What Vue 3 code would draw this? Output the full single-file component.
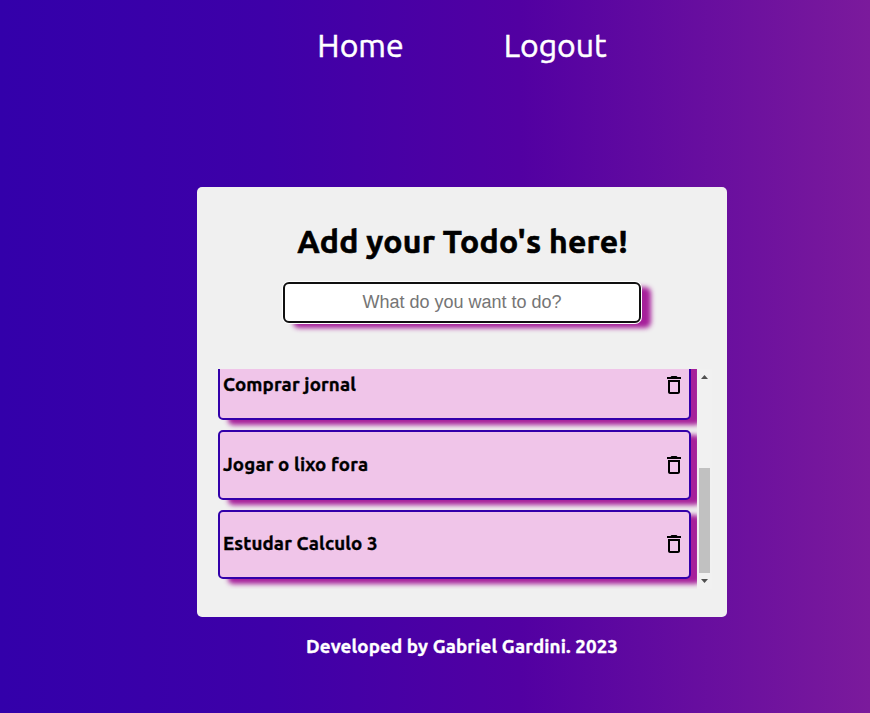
<script setup>
import { ref, onMounted } from 'vue'

const links = [
  { label: 'Home', cls: 'home' },
  { label: 'Logout', cls: 'logout' },
]
const todos = ref(['Comprar jornal', 'Jogar o lixo fora', 'Estudar Calculo 3'])
const draft = ref('')
const list = ref(null)

function remove(index) {
  todos.value.splice(index, 1)
}
function add() {
  if (draft.value.trim()) todos.value.push(draft.value.trim())
  draft.value = ''
}
onMounted(() => {
  list.value.scrollTop = list.value.scrollHeight
})
</script>

<template>
  <div class="viewport">
    <div class="page">
      <nav class="nav">
        <a v-for="link in links" :key="link.label" :class="link.cls">{{ link.label }}</a>
      </nav>
      <main class="card">
        <h1>Add your Todo's here!</h1>
        <input v-model="draft" class="entry" placeholder="What do you want to do?" @keyup.enter="add" />
        <div class="scroller">
          <ul ref="list" class="list">
            <li v-for="(todo, i) in todos" :key="todo" class="todo">
              <span class="label">{{ todo }}</span>
              <svg class="trash" viewBox="0 0 24 24" @click="remove(i)">
                <path d="M6 19c0 1.1.9 2 2 2h8c1.1 0 2-.9 2-2V7H6v12zM8 9h8v10H8V9zm7.5-5l-1-1h-5l-1 1H5v2h14V4z" />
              </svg>
            </li>
          </ul>
          <div class="bar">
            <svg class="arrow" viewBox="0 0 7 4"><path d="M0 4L3.5 0L7 4z" /></svg>
            <div class="thumb"></div>
            <svg class="arrow" viewBox="0 0 7 4"><path d="M0 0L3.5 4L7 0z" /></svg>
          </div>
        </div>
      </main>
      <footer>Developed by Gabriel Gardini. 2023</footer>
    </div>
  </div>
</template>

<style>
body {
  margin: 0;
  overflow: hidden;
}
</style>

<style scoped>
.viewport {
  width: 100%;
  height: 713px;
  overflow: hidden;
  font-family: Ubuntu, 'Noto Sans', sans-serif;
}
.page {
  width: 924px;
  height: 713px;
  display: flex;
  flex-direction: column;
  align-items: center;
  background: linear-gradient(90deg, #3300aa 0, #3e00a8 270px, #5200a2 520px, #7b1a9c 870px);
}
.nav {
  height: 187px;
  box-sizing: border-box;
  padding-top: 23px;
  display: flex;
  gap: 100px;
  color: #fff;
  font-size: 32px;
  line-height: 44px;
  -webkit-text-stroke: 0.5px #fff;
}
.card {
  width: 530px;
  height: 430px;
  box-sizing: border-box;
  padding: 31px 15px 0 21px;
  display: flex;
  flex-direction: column;
  align-items: center;
  background: #f0f0f0;
  border-radius: 5px;
}
h1 {
  margin: 0 5px 0 0;
  font-size: 32px;
  font-weight: 700;
  line-height: 46px;
  letter-spacing: 0.22px;
  white-space: nowrap;
  -webkit-text-stroke: 0.6px #000;
}
.entry {
  box-sizing: border-box;
  width: 358px;
  height: 41px;
  margin: 18px 6px 0 0;
  padding: 0;
  border: 2px solid #101010;
  border-radius: 6px;
  outline: none;
  background: #fff;
  box-shadow: 0 0 0 1px #fff, 10px 5px 5px #a6209a;
  font: 18px 'Liberation Sans', sans-serif;
  text-align: center;
}
.entry::placeholder {
  color: #757575;
}
.scroller {
  width: 494px;
  height: 220px;
  margin-top: 46px;
  display: flex;
}
.list {
  width: 479px;
  height: 220px;
  box-sizing: border-box;
  margin: 0;
  padding: 0 0 10px;
  list-style: none;
  overflow: hidden;
}
.todo {
  box-sizing: border-box;
  width: 473px;
  height: 69.4px;
  margin-bottom: 10.1px;
  padding: 0 3px 0.6px;
  display: flex;
  align-items: center;
  justify-content: space-between;
  border: 2px solid #3300aa;
  border-radius: 5px;
  background: #f0c5e9;
  box-shadow: 10px 5px 5px #a6209a;
  font-size: 18.72px;
  font-weight: 700;
}
.todo:last-child {
  margin-bottom: 0;
}
.label {
  padding-bottom: 1px;
  letter-spacing: 0.14px;
  -webkit-text-stroke: 0.35px #000;
}
.trash {
  width: 24px;
  height: 24px;
}
.bar {
  width: 15px;
  display: flex;
  flex-direction: column;
  align-items: center;
  background: #f1f1f1;
  box-sizing: border-box;
  padding: 6px 0;
}
.arrow {
  width: 7px;
  height: 4px;
  fill: #505050;
}
.thumb {
  width: 11px;
  height: 105px;
  margin: 89px 0 6px;
  background: #c1c1c1;
}
footer {
  margin-top: 17px;
  color: #fff;
  font-size: 18.72px;
  font-weight: 700;
  line-height: 25px;
  letter-spacing: 0.14px;
  -webkit-text-stroke: 0.35px #fff;
}
</style>
